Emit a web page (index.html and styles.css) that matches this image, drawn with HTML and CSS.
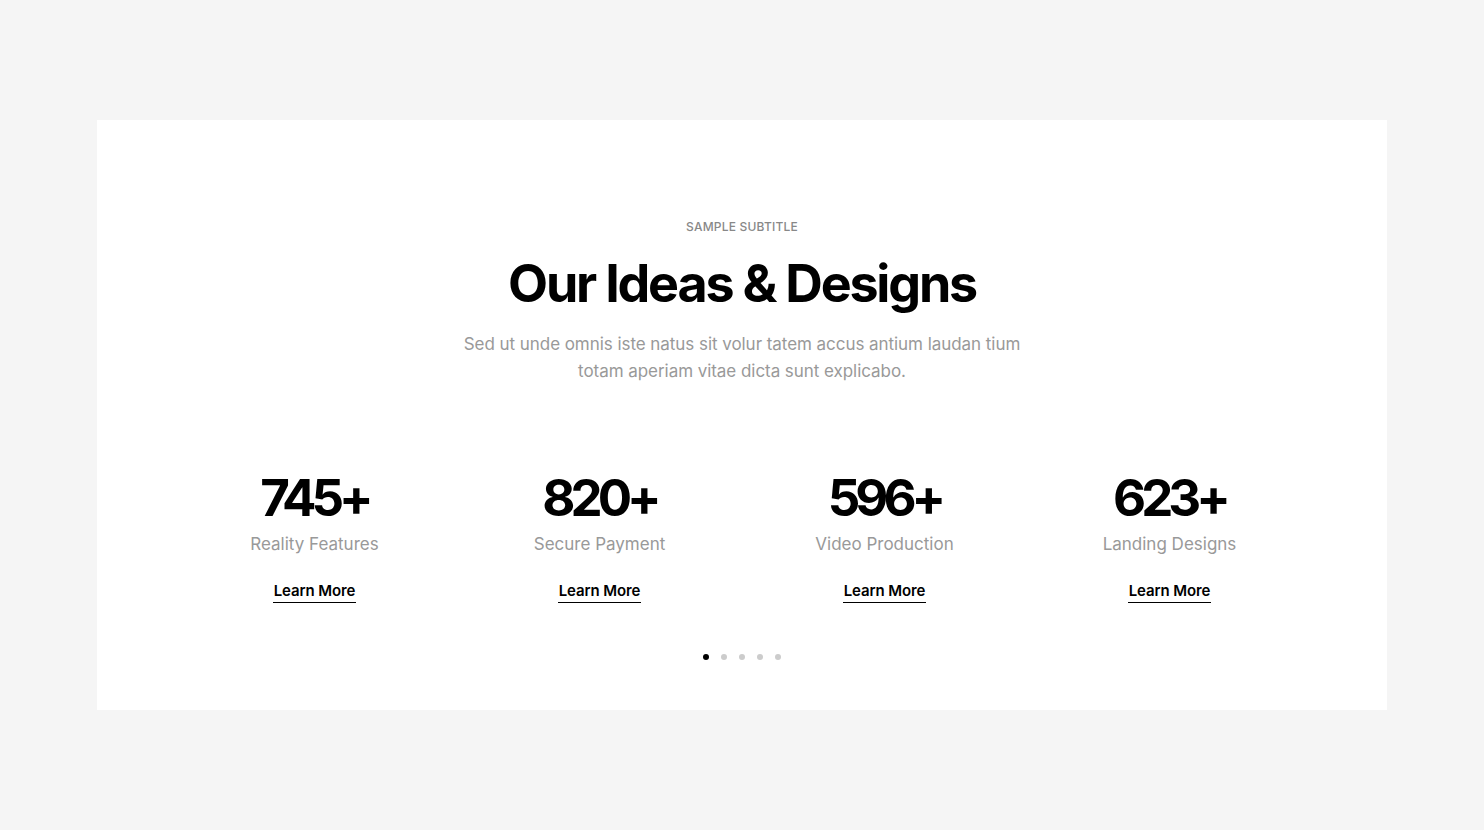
FILE: index.html
```html
<!DOCTYPE html>
<html lang="en">
<head>
<meta charset="utf-8">
<title>Our Ideas &amp; Designs</title>
<link rel="stylesheet" href="styles.css">
</head>
<body>
<main class="page">
  <section class="card">
    <p class="subtitle">SAMPLE SUBTITLE</p>
    <h1 class="title">Our Ideas &amp; Designs</h1>
    <p class="lead">Sed ut unde omnis iste natus sit volur tatem accus antium laudan tium<br>totam aperiam vitae dicta sunt explicabo.</p>
    <div class="stats">
      <div class="stat">
        <div class="num">745+</div>
        <div class="label">Reality Features</div>
        <a class="more" href="#">Learn More</a>
      </div>
      <div class="stat">
        <div class="num">820+</div>
        <div class="label">Secure Payment</div>
        <a class="more" href="#">Learn More</a>
      </div>
      <div class="stat">
        <div class="num">596+</div>
        <div class="label">Video Production</div>
        <a class="more" href="#">Learn More</a>
      </div>
      <div class="stat">
        <div class="num">623+</div>
        <div class="label">Landing Designs</div>
        <a class="more" href="#">Learn More</a>
      </div>
    </div>
    <div class="dots">
      <span class="dot active"></span>
      <span class="dot"></span>
      <span class="dot"></span>
      <span class="dot"></span>
      <span class="dot"></span>
    </div>
  </section>
</main>
</body>
</html>
```

FILE: styles.css
```css
* { box-sizing: border-box; }
html, body { margin: 0; padding: 0; }
body {
  background: #f5f5f5;
  font-family: Inter, "Liberation Sans", sans-serif;
  color: #000;
}
.page {
  padding: 120px 97px 120px;
}
.card {
  background: #fff;
  height: 590px;
  padding-top: 99px;
  display: flex;
  flex-direction: column;
  align-items: center;
}
.subtitle {
  margin: 0;
  font-size: 12px;
  line-height: 16px;
  font-weight: 500;
  color: #888;
  letter-spacing: 0.2px;
}
.title {
  margin: 19px 0 0;
  font-size: 52px;
  line-height: 60px;
  font-weight: 700;
  letter-spacing: -2.2px;
}
.lead {
  margin: 17px 0 0;
  font-size: 17px;
  line-height: 27px;
  color: #999;
  text-align: center;
  letter-spacing: -0.05px;
}
.stats {
  margin-top: 85px;
  width: 1140px;
  display: grid;
  grid-template-columns: repeat(4, 1fr);
}
.stat {
  display: flex;
  flex-direction: column;
  align-items: center;
}
.num {
  font-size: 51px;
  line-height: 56px;
  font-weight: 700;
  letter-spacing: -5px;
}
.label {
  margin-top: 6px;
  font-size: 17px;
  line-height: 24px;
  color: #999;
  letter-spacing: 0;
}
.more {
  margin-top: 25px;
  font-size: 15px;
  line-height: 20px;
  font-weight: 600;
  color: #000;
  text-decoration: none;
  border-bottom: 1px solid #000;
  padding: 0 1px 1px;
  letter-spacing: -0.1px;
}
.dots {
  margin-top: 51px;
  display: flex;
  gap: 12px;
}
.dot {
  width: 6px;
  height: 6px;
  border-radius: 50%;
  background: #ccc;
}
.dot.active { background: #000; }
```
